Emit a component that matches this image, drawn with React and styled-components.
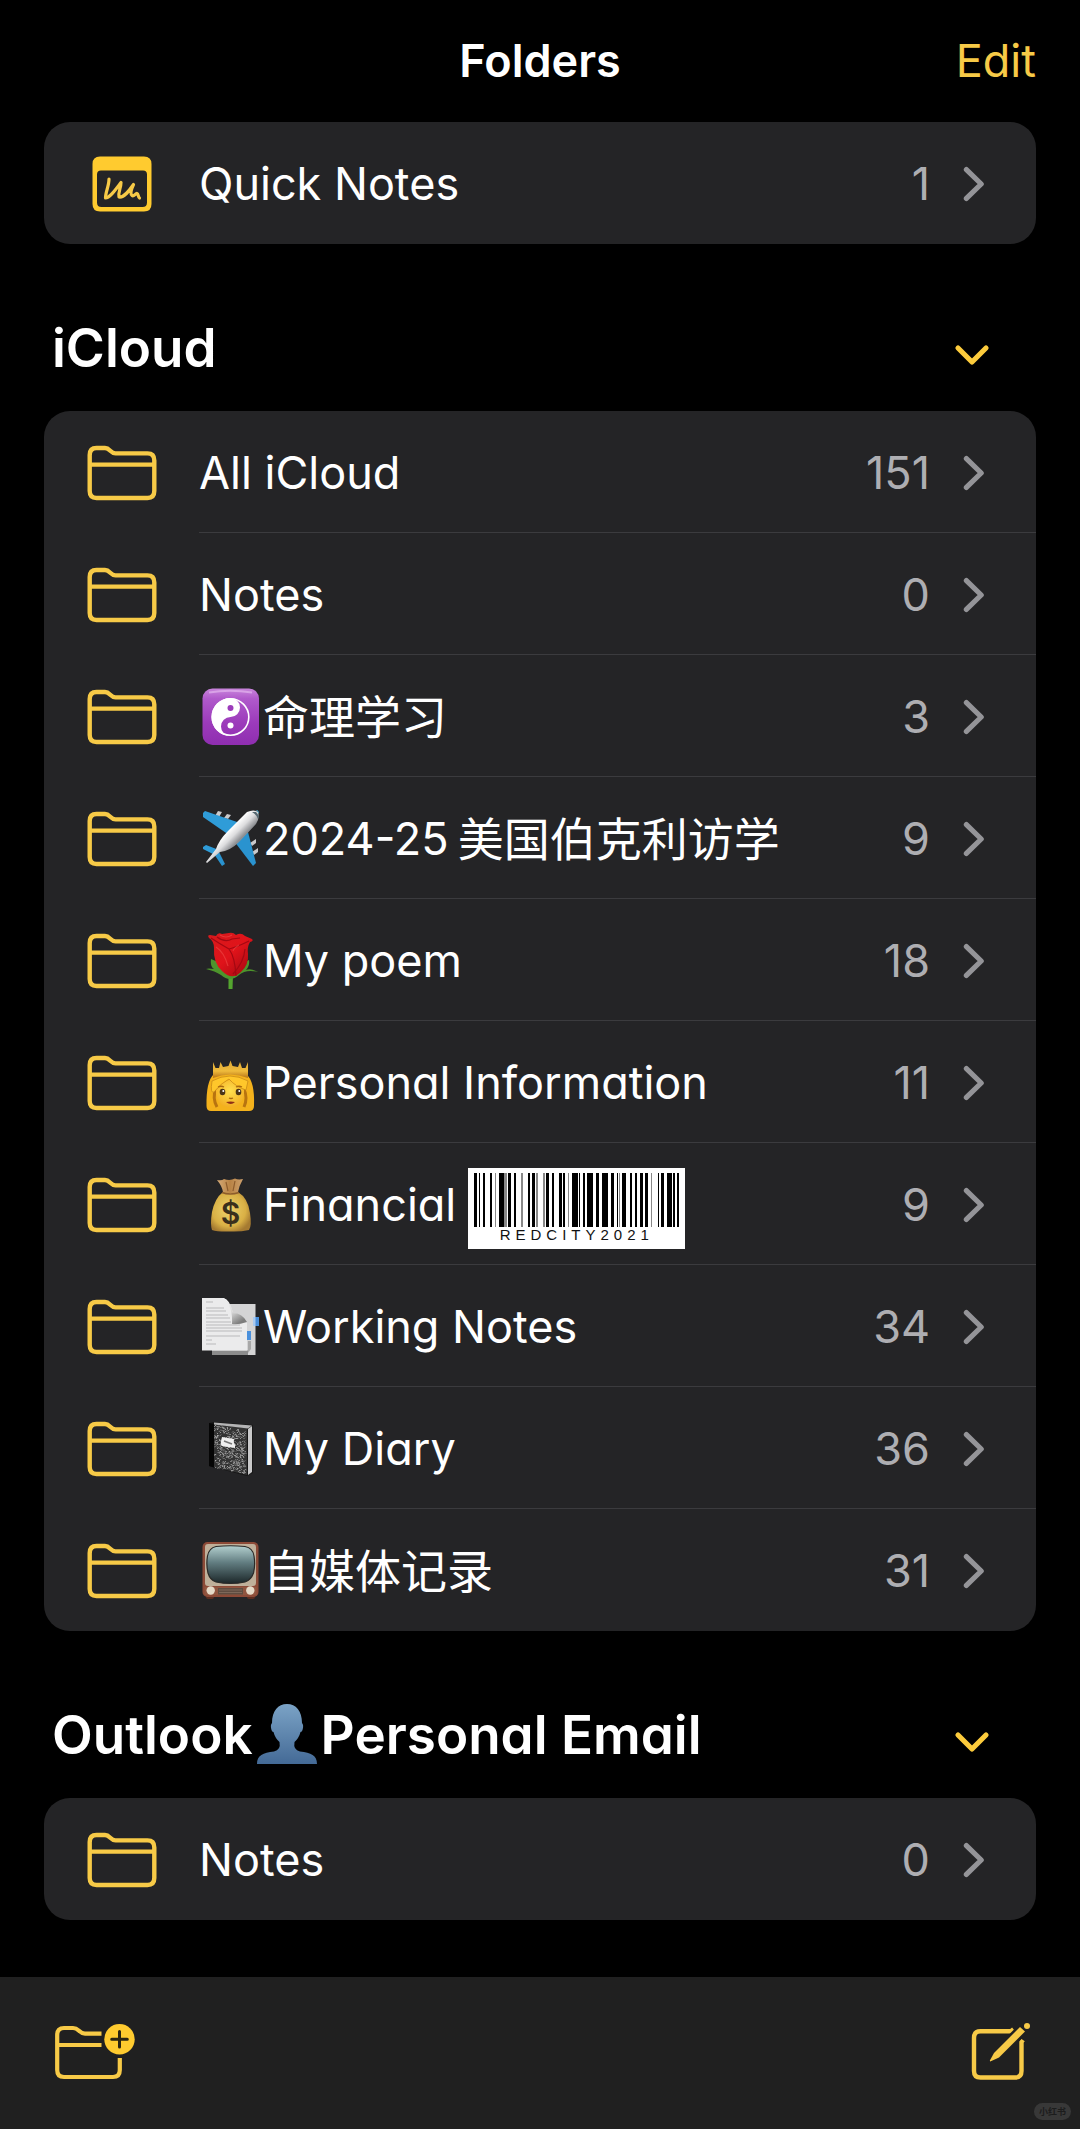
import React, {useState} from "react";
import styled, {createGlobalStyle} from "styled-components";

const GOLD = "#f7ca47";

const GlobalStyle = createGlobalStyle`
  * {
    box-sizing: border-box;
  }
  body {
    margin: 0;
    background: #000;
    color: #fff;
    font-family: Inter, "Noto Sans CJK SC", sans-serif;
    font-size: 45px;
    line-height: 64px;
    font-feature-settings: "cv11";
  }
  button {
    font: inherit;
    padding: 0;
    border: 0;
    background: none;
    cursor: pointer;
  }
  svg {
    display: block;
    flex: none;
  }
`

const Page = styled.div`
  min-height: 100vh;
  display: flex;
  flex-direction: column;
`

const NavBar = styled.header`
  height: 122px;
  padding: 0 44px;
  display: grid;
  grid-template-columns: 1fr auto 1fr;
  align-items: center;
`

const NavTitle = styled.h1`
  grid-column: 2;
  margin: 0;
  font-size: 45px;
  font-weight: 600;
`

const EditButton = styled.button`
  justify-self: end;
  color: ${GOLD};
`

const Content = styled.main`
  flex: 1;
  padding: 0 44px 57px;
`

const SectionHeader = styled.div`
  display: flex;
  justify-content: space-between;
  padding: 72px 46px 31px 8px;
`

const SectionTitle = styled.h2`
  display: flex;
  align-items: center;
  margin: 0;
  font-size: 53px;
  font-weight: 600;
`

const ToggleButton = styled.button`
  display: flex;
  align-items: center;
  padding-top: 14px;
  svg {
    transform: ${(props) => (props.$open ? "none" : "rotate(-90deg)")};
  }
`

const Card = styled.ul`
  list-style: none;
  margin: 0;
  padding: 0;
  background: #242426;
  border-radius: 26px;
  overflow: hidden;
`

const RowLink = styled.a`
  display: flex;
  height: 122px;
  padding-top: 2px;
  color: inherit;
  text-decoration: none;
`

const RowIcon = styled.span`
  width: 155px;
  flex: none;
  display: flex;
  align-items: center;
  justify-content: center;
`

const RowBody = styled.span`
  flex: 1;
  display: flex;
  align-items: center;
  padding-right: 51px;
  border-bottom: 1px solid transparent;
  li:not(:last-child) & {
    border-bottom-color: #3b3b3e;
  }
`

const RowLabel = styled.span`
  display: flex;
  align-items: center;
  white-space: nowrap;
`

const Hanzi = styled.span`
  margin-left: ${(props) => (props.$spaced ? "9px" : "0")};
  font-size: 46px;
`

const RowCount = styled.span`
  margin-left: auto;
  margin-right: 33px;
  color: #aeaeb2;
`

const BarcodeTag = styled.span`
  align-self: flex-end;
  width: 217px;
  height: 81px;
  margin: 0 0 15px 12px;
  padding: 5px 6px 0;
  background: #fff;
  color: #111;
  font-family: "Liberation Sans", Arial, sans-serif;
  font-size: 15px;
  line-height: 16px;
  letter-spacing: 5px;
  text-align: center;
`

const Toolbar = styled.footer`
  position: relative;
  height: 152px;
  padding: 46px 48px 0 54px;
  display: flex;
  justify-content: space-between;
  align-items: flex-start;
  background: #202020;
`

const Watermark = styled.span`
  position: absolute;
  right: 9px;
  bottom: 9px;
  padding: 0 5px;
  border-radius: 9px;
  background: #383838;
  color: #1c1c1c;
  font-size: 9px;
  font-weight: 700;
  line-height: 17px;
`

const FolderIcon = () => (
  <svg width="70" height="56" viewBox="0 0 70 56" fill="none" stroke={GOLD} strokeWidth="4.4" aria-hidden="true">
    <path d="M2.7 10 Q2.7 3 9.5 3 H18 C23 3 23.5 8.4 28.5 8.4 H60.5 Q67.3 8.4 67.3 15.4 V46 Q67.3 53 60.5 53 H9.5 Q2.7 53 2.7 46 Z"/>
    <path d="M3 19.6 H67"/>
  </svg>
)

const QuickNoteIcon = () => (
  <svg width="60" height="56" viewBox="0 0 60 56" fill="none" aria-hidden="true">
    <path fill="#ffcb2f" fillRule="evenodd" d="M8 .5 H52 Q59.5 .5 59.5 8 V48 Q59.5 55.5 52 55.5 H8 Q.5 55.5 .5 48 V8 Q.5 .5 8 .5 Z M9 14.5 Q5 14.5 5 18.5 V46.5 Q5 51 9.5 51 H50.5 Q55 51 55 46.5 V18.5 Q55 14.5 51 14.5 Z"/>
    <path stroke={GOLD} strokeWidth="3.2" strokeLinecap="round" strokeLinejoin="round" d="M17 23 C17 30 13.5 36 13.5 42 C18 42 24 33 29 26.5 C29 32 26 36 27 41 C32 42 37 35 41.5 28.5 C38.5 35 38 38 40 39.5 C42 41 43.5 37 45 37.5 C46.5 38 46 41 47.5 42"/>
  </svg>
)

const ChevronRight = () => (
  <svg width="22" height="36" viewBox="0 0 22 36" fill="none" stroke="#949498" strokeWidth="5.2" strokeLinecap="round" strokeLinejoin="round" aria-hidden="true">
    <path d="M3.4 3.6 L18.2 18 L3.4 32.4"/>
  </svg>
)

const ChevronDown = () => (
  <svg width="36" height="22" viewBox="0 0 36 22" fill="none" stroke="#fccb3c" strokeWidth="5.2" strokeLinecap="round" strokeLinejoin="round" aria-hidden="true">
    <path d="M4 4 L18 18 L32 4"/>
  </svg>
)

const NewFolderIcon = () => (
  <svg width="84" height="58" viewBox="0 0 84 58" fill="none" stroke={GOLD} strokeWidth="4.2" aria-hidden="true">
    <path d="M47.5 10.7 H31 C25 10.7 25 5 19 5 H10 Q3.2 5 3.2 12 V47 Q3.2 54 10 54 H59 Q65.8 54 65.8 47 V35"/>
    <path d="M3.2 22 H47.5"/>
    <circle cx="65.5" cy="16.3" r="15.2" fill="#ffcb2f" stroke="none"/>
    <path stroke="#2a2412" strokeWidth="3" strokeLinecap="round" d="M65.5 8.5 V24 M57.7 16.3 H73.3"/>
  </svg>
)

const ComposeIcon = () => (
  <svg width="62" height="60" viewBox="0 0 62 60" fill="none" stroke={GOLD} strokeWidth="4.4" aria-hidden="true">
    <path d="M43.5 6.2 L41 8.3 H10.5 Q4 8.3 4 15 V48 Q4 54.5 10.5 54.5 H45 Q51.5 54.5 51.5 48 V19 L53 17"/>
    <path stroke="#202020" strokeWidth="12" d="M42 17 L60 -1"/>
    <path fill={GOLD} stroke="none" d="M50 4 L55 8.5 L29 34.5 L20.8 38.3 Q19.5 38.8 20 37.3 L24 30 Z"/>
    <circle cx="57" cy="3" r="3" fill={GOLD} stroke="none"/>
  </svg>
)

const Emoji = ({label, children}) => (
  <svg width="64" height="58" viewBox="-3 0 64 58" role="img" aria-label={label}>{children}</svg>
)

const YinYang = () => (
  <Emoji label="Yin yang">
    <defs>
      <linearGradient id="yy" x1="0" y1="0" x2="0" y2="1">
        <stop offset="0" stopColor="#c985dc"/>
        <stop offset=".18" stopColor="#b05acb"/>
        <stop offset=".6" stopColor="#9c3bbb"/>
        <stop offset="1" stopColor="#8f2eb0"/>
      </linearGradient>
    </defs>
    <rect x=".5" y=".5" width="56.5" height="56.5" rx="10" fill="url(#yy)"/>
    <path d="M7 4.5 Q28 1 50 4.5" stroke="#e3b5ee" strokeWidth="2" fill="none" opacity=".7"/>
    <circle cx="28.5" cy="29" r="18.3" fill="none" stroke="#fff" strokeWidth="1.6"/>
    <path fill="#fff" d="M28.5 10 A19 19 0 0 0 28.5 48 A9.5 9.5 0 0 1 28.5 29 A9.5 9.5 0 0 0 28.5 10 Z"/>
    <circle cx="28.5" cy="20" r="3" fill="#9c3bbb"/>
    <circle cx="28.5" cy="37.5" r="3" fill="#fff"/>
  </Emoji>
)

const Airplane = () => (
  <Emoji label="Airplane">
    <defs>
      <linearGradient id="body" gradientUnits="userSpaceOnUse" x1="30" y1="17" x2="40" y2="27">
        <stop offset="0" stopColor="#fff"/>
        <stop offset=".5" stopColor="#dcdcde"/>
        <stop offset="1" stopColor="#8e9094"/>
      </linearGradient>
    </defs>
    <g fill="#c9c9cb">
      <path d="M16 1 L20 2 L17 7 L13 6 Z"/>
      <path d="M25 4 L29 5 L26 9 L22 8 Z"/>
      <path d="M48 33 L54 29 L54 33 L50 36 Z"/>
      <path d="M50 42 L56 38 L56 42 L52 45 Z"/>
    </g>
    <path fill="#2f9cd8" d="M1 3 L3 1 L38 13 L27 25 L1 7 Z"/>
    <path fill="#2a93cf" d="M46 22 L54 53 L51 56 L32 31 Z"/>
    <path fill="#2f9cd8" d="M1 37 L4 35 L17 40 L13 45 L1 39 Z"/>
    <path fill="#2a93cf" d="M17 42 L23 54 L20 56 L12 44 Z"/>
    <path fill="url(#body)" d="M45 2 Q52 -1 56 2 Q58 8 54 14 L37 32 Q28 41 18 42 L5 53 L4 52 L14 39 Q17 30 26 21 Z"/>
    <path fill="#53666f" d="M50 2 L54 2 L57 6 L56 9 Q54 4 50 2 Z"/>
    <path fill="#53b8e2" d="M54 0 Q57 0 57 4 Q56 2 54 0 Z"/>
  </Emoji>
)

const Rose = () => (
  <Emoji label="Rose">
    <defs>
      <linearGradient id="petal" x1="0" y1="0" x2="1" y2="1">
        <stop offset="0" stopColor="#d61a1c"/>
        <stop offset=".5" stopColor="#e0131a"/>
        <stop offset="1" stopColor="#9d0710"/>
      </linearGradient>
    </defs>
    <path fill="#54a52f" d="M26.5 43 H31 L30.5 57 H26.5 Z"/>
    <path fill="#4d942c" d="M9 27 Q8 35 12 37 Q6 36 4 37 Q13 39 19 43 Q28 51 37 43 Q44 37 56 40 Q49 36 44 38 Q48 34 47 28 L30 36 Z"/>
    <path fill="url(#petal)" d="M7 6 Q5 3 8 3 L14 4 Q16 0 20 2 L27 1 Q31 0 34 3 Q39 0 43 4 L50 7 Q52 9 48 10 Q45 15 46 22 Q47 33 39 40 Q30 49 20 39 Q11 31 12 16 Q12 9 7 6 Z"/>
    <path fill="none" stroke="#a30812" strokeWidth="1.2" d="M9 6 Q18 12 27 17 Q35 15 47 9 M27 17 Q33 25 34 44 M43 17 Q42 30 31 42 M15 5 Q23 11 30 7 L38 6"/>
    <path fill="none" stroke="#f4534f" strokeWidth="1.2" opacity=".5" d="M14 15 Q22 20 26 34 M18 3 Q24 7 30 3 M37 13 Q32 16 31 19"/>
  </Emoji>
)

const Princess = () => (
  <Emoji label="Princess">
    <defs>
      <linearGradient id="crown" x1="0" y1="0" x2="0" y2="1">
        <stop offset="0" stopColor="#e0a935"/>
        <stop offset=".6" stopColor="#efbb3c"/>
        <stop offset="1" stopColor="#b87415"/>
      </linearGradient>
      <radialGradient id="face" cx=".5" cy=".4" r=".6">
        <stop offset="0" stopColor="#ffe04f"/>
        <stop offset="1" stopColor="#f3ae22"/>
      </radialGradient>
    </defs>
    <path fill="#f4b21c" d="M12 20 Q4 27 4.5 52 Q4.5 57 9 57 H47 Q52 57 52 52 Q53 27 44 20 Z"/>
    <path fill="none" stroke="#b87410" strokeWidth="3" d="M15 53 Q10 44 14 34 M42 53 Q46 44 42 35"/>
    <path fill="url(#face)" d="M14 35 Q20 28 28 26 Q39 26 42 36 Q43 46 36 51 Q28 56 20 51 Q13 46 14 35 Z"/>
    <path fill="#ffc72b" stroke="#c98a18" strokeWidth=".8" d="M10 27 Q28 17 46 27 L44 36 Q34 33 27 25 Q19 29 12 38 Q8 40 10 27 Z"/>
    <path fill="url(#crown)" d="M11 8 L13.5 14 L17 14 L18.5 8 L21 13 L26.5 12 L28.5 6.5 L30.5 12 L36 13 L38 8 L40 14 L43.5 14 L46 8 L46 24 Q28 17 11 24 Z"/>
    <ellipse cx="20.5" cy="38" rx="2.8" ry="3.2" fill="#4b3517"/>
    <ellipse cx="36.5" cy="38" rx="2.8" ry="3.2" fill="#4b3517"/>
    <circle cx="21.3" cy="37" r="1" fill="#fff"/>
    <circle cx="37.3" cy="37" r="1" fill="#fff"/>
    <path d="M16 33 Q19 31.5 22 33 M34 33 Q37 31.5 40 33 M27 44 Q29 45 31 44" stroke="#a8690f" strokeWidth="1.3" fill="none"/>
    <path fill="#8e2d16" d="M24 48 Q29 47 33 48 Q29 52 24 48 Z"/>
  </Emoji>
)

const MoneyBag = () => (
  <Emoji label="Money bag">
    <defs>
      <radialGradient id="bag" cx=".45" cy=".45" r=".6">
        <stop offset="0" stopColor="#eed36c"/>
        <stop offset=".7" stopColor="#d9b045"/>
        <stop offset="1" stopColor="#a57a31"/>
      </radialGradient>
      <linearGradient id="neck" x1="0" y1="0" x2="1" y2="0">
        <stop offset="0" stopColor="#d6ab78"/>
        <stop offset=".5" stopColor="#b98345"/>
        <stop offset="1" stopColor="#cda06d"/>
      </linearGradient>
    </defs>
    <path fill="url(#bag)" d="M21 16 H36 Q46 22 48 37 Q50 50 47 54 Q38 56 28 55.5 Q16 56 10 54 Q8 48 10 36 Q13 22 21 16 Z"/>
    <path fill="url(#neck)" d="M15 4 Q20 5 22 3 Q28 5 33 2.5 Q36 4 41 3 Q37 10 36 16 Q28 18 21 16 Q20 10 15 4 Z"/>
    <path d="M24 6 L26 15 M33 5 L31 15" stroke="#8d5c2c" strokeWidth="1.2"/>
    <path d="M20 16.5 Q28 19.5 37 16.5" stroke="#8d5c2c" strokeWidth="1.6" fill="none"/>
    <text x="28.5" y="48" textAnchor="middle" fontSize="30" fontWeight="600" fill="#3a2f1c">$</text>
  </Emoji>
)

const PageCurl = () => (
  <Emoji label="Page with curl">
    <defs>
      <linearGradient id="curl" x1="0" y1="0" x2=".6" y2="1">
        <stop offset="0" stopColor="#f7f7f7"/>
        <stop offset=".55" stopColor="#dadada"/>
        <stop offset="1" stopColor="#7c7c7c"/>
      </linearGradient>
    </defs>
    <rect x="10" y="6" width="43.5" height="51" fill="#d4d4d5"/>
    <path d="M10 52.5 H46 V57 H10 Z" fill="#8c8c8c"/>
    <rect x="51" y="19" width="6" height="9" fill="#4a90dc"/>
    <rect x="51" y="19" width="2.5" height="9" fill="#a9caf0"/>
    <path fill="#ebebec" d="M0 0 H22 Q30 8 31 15 Q40 16 45 25 V52.5 H0 Z"/>
    <path fill="url(#curl)" d="M21 0 Q28 1 31 15 Q40 15 45 24 Q36 27 30 26 Q31 8 21 0 Z"/>
    <path d="M4 4 H11 M4 10 H22 M4 13 H24 M4 17 H26 M4 20 H28 M4 24 H29 M4 27 H38 M4 30 H40 M4 33 H40 M4 38 H38 M4 42 H10 M4 46 H14" stroke="#b9b9bb" strokeWidth="1"/>
    <rect x="45" y="33" width="4" height="9" fill="#4a90dc"/>
    <path d="M46 43 H49 V51 L46 55 Z" fill="#a8a8a8"/>
  </Emoji>
)

const noise = (n) => {
  const v = Math.sin(n * 12.9898) * 43758.5453
  return v - Math.floor(v)
}

const specks = Array.from({length: 460}, (_, i) => {
  const x = 12.5 + noise(i + 1) * 31
  const y = 4 + noise(i + 501) * 43 + (x - 12) * 0.2
  return `M${x.toFixed(1)} ${y.toFixed(1)}l${noise(i + 901) > 0.5 ? 1 : -1} 1`
}).join("")

const Notebook = () => (
  <Emoji label="Notebook">
    <path fill="#161616" d="M7 3 L12 2 L51 5 V53 L45 56 L7 46 Z"/>
    <path fill="#333" d="M12 4 L45 8 V55 L12 47 Z"/>
    <path d={specks} stroke="#a9a9a9" strokeWidth="1"/>
    <path fill="#050505" d="M7 3 L12 4 V47.5 L7 46 Z"/>
    <path fill="#c9c9ca" d="M46 9 L50 6 V52 L46 55 Z"/>
    <path fill="#b4b4b5" d="M12 2.5 L50 5.5 L46 8.5 L12 4.5 Z"/>
    <path fill="#efefef" d="M20 17 L32 19 Q31 22 33 25 L33 28 L20 26 Q18 24 19 21 Z"/>
    <path d="M22 21 L30 24" stroke="#777" strokeWidth="1.6"/>
  </Emoji>
)

const Television = () => (
  <Emoji label="Television">
    <defs>
      <linearGradient id="screen" x1="0" y1="0" x2="0" y2="1">
        <stop offset="0" stopColor="#b3d0cf"/>
        <stop offset=".45" stopColor="#617c80"/>
        <stop offset="1" stopColor="#1c2729"/>
      </linearGradient>
    </defs>
    <rect x="4" y="52" width="8" height="5" rx="2" fill="#5b2d20"/>
    <rect x="45" y="52" width="8" height="5" rx="2" fill="#5b2d20"/>
    <rect x=".5" y="0" width="56" height="55" rx="5" fill="#8c4a37"/>
    <rect x="3" y="2" width="51" height="42" rx="3" fill="#bfb09a"/>
    <path fill="url(#screen)" stroke="#2a2a28" strokeWidth="1.2" d="M14 4.5 Q28.5 3 43 4.5 Q51 6 52 14 Q53.5 23 51.5 31 Q49 38 43 40 Q28.5 43 14 40 Q8 38 6 31 Q4 23 5.5 14 Q7 6 14 4.5 Z"/>
    <rect x="2.5" y="45" width="52" height="8" fill="#90553f"/>
    <rect x="16" y="46" width="25" height="6.5" fill="#5f4c40"/>
    <path d="M17 48 H40 M17 50.5 H40" stroke="#86705f" strokeWidth=".8"/>
    <circle cx="8.7" cy="48.5" r="4.2" fill="#e5dac8"/>
    <circle cx="48.3" cy="48.5" r="4.2" fill="#e5dac8"/>
  </Emoji>
)

const Silhouette = () => (
  <svg width="68" height="62" viewBox="-4 0 68 62" role="img" aria-label="Bust in silhouette">
    <defs>
      <linearGradient id="bust" x1="0" y1="0" x2="0" y2="1">
        <stop offset="0" stopColor="#7ba3c6"/>
        <stop offset="1" stopColor="#446a96"/>
      </linearGradient>
    </defs>
    <path fill="url(#bust)" d="M30 0 C39 0 45 7 45 19 Q47 21 45.5 26 Q45 28 43.5 28 Q42 34 37.5 38 Q36 46 43 47.5 C54 49 60 51 60 60 H0 C0 51 6 49 17 47.5 Q24 46 22.5 38 Q18 34 16.5 28 Q15 28 14.5 26 Q13 21 15 19 C15 7 21 0 30 0 Z"/>
  </svg>
)

// start and width of each bar; the third value marks a lighter one
const bars = [
  [0, 3], [5, 1], [9, 2], [16, 2], [21, 1, 1], [25, 5], [30, 3, 1], [34, 3], [40, 2], [47, 2, 1], [54, 2],
  [58, 3], [62, 2, 1], [69, 2, 1], [72, 3], [78, 2], [85, 3], [89, 2], [94, 1, 1], [98, 6], [105, 1], [109, 2],
  [113, 6], [122, 3], [128, 6], [137, 3], [143, 1], [145, 1, 1], [148, 4], [156, 2], [161, 2], [166, 3],
  [171, 3], [177, 1, 1], [184, 1], [187, 3], [193, 5], [199, 2], [203, 2],
]

const Barcode = () => (
  <BarcodeTag>
    <svg width="205" height="54" viewBox="0 0 205 54" aria-hidden="true">
      {bars.map(([x, width, light]) => (
        <rect key={x} x={x} width={width} height="54" fill={light ? "#888" : "#000"}/>
      ))}
    </svg>
    REDCITY2021
  </BarcodeTag>
)

const icloudFolders = [
  {name: "All iCloud", count: 151},
  {name: "Notes", count: 0},
  {hanzi: "命理学习", count: 3, emoji: <YinYang/>},
  {name: "2024-25", hanzi: "美国伯克利访学", count: 9, emoji: <Airplane/>},
  {name: "My poem", count: 18, emoji: <Rose/>},
  {name: "Personal Information", count: 11, emoji: <Princess/>},
  {name: "Financial", count: 9, emoji: <MoneyBag/>, extra: <Barcode/>},
  {name: "Working Notes", count: 34, emoji: <PageCurl/>},
  {name: "My Diary", count: 36, emoji: <Notebook/>},
  {hanzi: "自媒体记录", count: 31, emoji: <Television/>},
]

const FolderRow = ({icon, emoji, name, hanzi, count, extra}) => (
  <li>
    <RowLink href="#">
      <RowIcon>{icon || <FolderIcon/>}</RowIcon>
      <RowBody>
        <RowLabel>
          {emoji}
          {name}
          {hanzi && <Hanzi $spaced={Boolean(name)}>{hanzi}</Hanzi>}
        </RowLabel>
        {extra}
        <RowCount>{count}</RowCount>
        <ChevronRight/>
      </RowBody>
    </RowLink>
  </li>
)

const Section = ({title, label, folders}) => {
  const [open, setOpen] = useState(true)

  return (
    <section>
      <SectionHeader>
        <SectionTitle>{title}</SectionTitle>
        <ToggleButton $open={open} aria-label={label} aria-expanded={open} onClick={() => setOpen(!open)}>
          <ChevronDown/>
        </ToggleButton>
      </SectionHeader>
      {open && (
        <Card>
          {folders.map((folder) => <FolderRow key={folder.name || folder.hanzi} {...folder}/>)}
        </Card>
      )}
    </section>
  )
}

export default function App() {
  return (
    <Page>
      <GlobalStyle/>
      <NavBar>
        <NavTitle>Folders</NavTitle>
        <EditButton>Edit</EditButton>
      </NavBar>
      <Content>
        <Card>
          <FolderRow icon={<QuickNoteIcon/>} name="Quick Notes" count={1}/>
        </Card>
        <Section title="iCloud" label="Toggle iCloud" folders={icloudFolders}/>
        <Section
          title={<>Outlook<Silhouette/>Personal Email</>}
          label="Toggle Outlook"
          folders={[{name: "Notes", count: 0}]}
        />
      </Content>
      <Toolbar>
        <button aria-label="New folder"><NewFolderIcon/></button>
        <button aria-label="New note"><ComposeIcon/></button>
        <Watermark>小红书</Watermark>
      </Toolbar>
    </Page>
  )
}
